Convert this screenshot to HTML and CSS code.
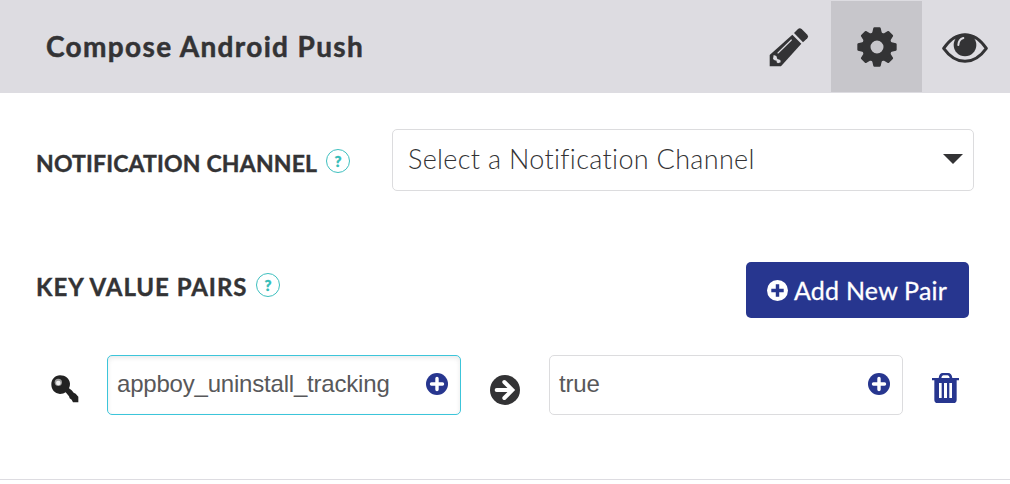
FILE: index.html
```html
<!DOCTYPE html>
<html lang="en">
<head>
<meta charset="utf-8">
<title>Compose Android Push</title>
<link rel="stylesheet" href="styles.css">
</head>
<body>
<main class="panel">
  <header class="header">
    <h1 class="title"><span>Compose Android Push</span></h1>
    <nav class="tabs">
      <button class="tab" aria-label="Compose">
        <svg width="40" height="40" viewBox="0 0 120 120" fill="#333335">
          <path d="M2 84L70 23L97 50L36 118H2Z"/>
          <path d="M75 18L87 6Q92 1 98 6L115 23Q120 29 115 34L102 46Z"/>
          <path d="M14 84L22 87L25 96L34 99L35 106L27 109L23 106V101L17 100L12 96Z" fill="#dddce1"/>
          <path d="M27 78L67 39" stroke="#dddce1" stroke-width="3.5" stroke-linecap="round"/>
        </svg>
      </button>
      <button class="tab tab-active" aria-label="Settings">
        <svg width="40" height="40" viewBox="-60 -60 120 120" fill="#333335">
          <defs><path id="tooth" d="M-20 -35L-14 -44L-11 -57Q-10 -59 -8 -59H8Q10 -59 11 -57L14 -44L20 -35Z"/></defs>
          <use href="#tooth"/><use href="#tooth" transform="rotate(45)"/><use href="#tooth" transform="rotate(90)"/><use href="#tooth" transform="rotate(135)"/><use href="#tooth" transform="rotate(180)"/><use href="#tooth" transform="rotate(225)"/><use href="#tooth" transform="rotate(270)"/><use href="#tooth" transform="rotate(315)"/>
          <circle r="32" fill="none" stroke="#333335" stroke-width="25"/>
        </svg>
      </button>
      <button class="tab" aria-label="Preview">
        <svg width="46" height="30" viewBox="0 0 138 90">
          <path d="M5 46Q33 5 69 5Q105 5 133 46Q105 85 69 85Q33 85 5 46Z" fill="none" stroke="#333335" stroke-width="9" stroke-linejoin="round"/>
          <circle cx="69" cy="36" r="34" fill="#333335"/>
          <path d="M49 36Q50 19 64 15" fill="none" stroke="#dddce1" stroke-width="6" stroke-linecap="round"/>
        </svg>
      </button>
    </nav>
  </header>

  <section class="channel">
    <h2 class="label label-channel"><span>NOTIFICATION CHANNEL</span></h2>
    <span class="help">?</span>
    <div class="select">
      <span class="select-text">Select a Notification Channel</span>
      <svg width="20" height="10" viewBox="0 0 20 10"><path d="M0 0H20L10 10Z" fill="#333335"/></svg>
    </div>
  </section>

  <section class="pairs-head">
    <h2 class="label label-pairs"><span>KEY VALUE PAIRS</span></h2>
    <span class="help help-pairs">?</span>
    <button class="add">
      <svg width="21" height="21" viewBox="0 0 22 22"><circle cx="11" cy="11" r="11" fill="#fff"/><path d="M11 4.5V17.5M4.5 11H17.5" stroke="#27368f" stroke-width="3.6"/></svg>
      <span class="add-text">Add New Pair</span>
    </button>
  </section>

  <section class="pair">
    <svg class="key" width="28" height="28" viewBox="0 0 84 84" fill="#222">
      <path d="M27 1C43 1 56 11 57 26Q57 35 54 40L62 46L68 53L74 56L82 65V82H66L62 74L56 70L54 64L44 52Q38 57 27 57C11 56 1 44 1 28C1 13 12 1 27 1Z"/>
      <circle cx="22" cy="22" r="11" fill="#999"/>
      <circle cx="22" cy="24" r="7" fill="#eee"/>
    </svg>
    <div class="field field-focus">
      <span>appboy_uninstall_tracking</span>
      <svg width="22" height="22" viewBox="0 0 22 22"><circle cx="11" cy="11" r="11" fill="#27368f"/><path d="M11 5.5V16.5M5.5 11H16.5" stroke="#fff" stroke-width="3.4" stroke-linecap="round"/></svg>
    </div>
    <svg class="arrow" width="30" height="30" viewBox="0 0 90 90">
      <circle cx="45" cy="45" r="45" fill="#333335"/>
      <path d="M20 45H66M43 21L67 45L43 69" fill="none" stroke="#fff" stroke-width="12" stroke-linecap="round" stroke-linejoin="miter"/>
    </svg>
    <div class="field">
      <span>true</span>
      <svg width="22" height="22" viewBox="0 0 22 22"><circle cx="11" cy="11" r="11" fill="#27368f"/><path d="M11 5.5V16.5M5.5 11H16.5" stroke="#fff" stroke-width="3.4" stroke-linecap="round"/></svg>
    </div>
    <svg class="trash" width="27" height="30" viewBox="0 0 81 90" fill="#27368f">
      <path fill-rule="evenodd" d="M0 15H20Q22 0 32 0H48Q59 0 61 15H81V22H74V80Q74 90 64 90H17Q7 90 7 80V22H0ZM28 15H53Q52 7 47 7H34Q29 7 28 15ZM21 30V75H29V30ZM36 30V75H45V30ZM52 30V75H60V30Z"/>
    </svg>
  </section>
</main>
</body>
</html>
```
FILE: styles.css
```css
* { box-sizing: border-box; }
body {
  margin: 0;
  background: #fff;
  color: #333335;
  font-family: Lato, sans-serif;
  font-variant-ligatures: none;
}
button {
  border: 0;
  padding: 0;
  background: none;
  font: inherit;
}
svg { display: block; flex: none; }
h1, h2 { margin: 0; white-space: nowrap; }

.panel {
  height: 480px;
  border-bottom: 1px solid #dddce1;
}
.header {
  display: flex;
  justify-content: space-between;
  height: 93px;
  padding-left: 46px;
  background: #dddce1;
}
.title {
  padding-top: 29px;
  font-size: 28px;
  line-height: 34px;
  font-weight: 700;
  letter-spacing: 1.35px;
  -webkit-text-stroke: .5px #333335;
}
.tabs { display: flex; padding: 1px 0; }
.tab {
  display: flex;
  align-items: center;
  justify-content: center;
  width: 86px;
  height: 91px;
  padding: 1px 0 0 1px;
}
.tab-active { width: 91px; background: #c7c6cb; }
.tab:last-child { width: 88px; padding: 3px 2px 0 0; }

.channel {
  display: flex;
  align-items: flex-start;
  padding: 36px 36px 0;
}
.label {
  font-size: 23px;
  line-height: 28px;
  font-weight: 700;
  -webkit-text-stroke: .4px #333335;
}
.label-channel { width: 290px; padding-top: 20px; letter-spacing: .17px; }
.label-pairs { width: 220px; padding-top: 11px; font-size: 24px; letter-spacing: .95px; }
.help {
  width: 24px;
  height: 24px;
  margin-top: 20px;
  border: 1px solid #3ec0bf;
  border-radius: 50%;
  color: #34bdb9;
  font-size: 15px;
  line-height: 22px;
  font-weight: 900;
  text-align: center;
  -webkit-text-stroke: .4px #34bdb9;
}
.help-pairs { margin-top: 11px; }
.select {
  display: flex;
  align-items: center;
  justify-content: space-between;
  width: 582px;
  height: 62px;
  margin-left: auto;
  padding: 0 10px 3px 15px;
  border: 1px solid #dcdcde;
  border-radius: 5px;
}
.select-text {
  font-size: 27px;
  font-weight: 300;
  letter-spacing: .32px;
  white-space: nowrap;
}
.pairs-head {
  display: flex;
  align-items: flex-start;
  padding: 71px 41px 0 36px;
}
.add {
  display: flex;
  align-items: center;
  gap: 6px;
  width: 223px;
  height: 56px;
  margin-left: auto;
  padding-left: 21px;
  border-radius: 5px;
  background: #27368f;
  color: #fff;
  font-size: 25px;
  letter-spacing: .22px;
  white-space: nowrap;
  -webkit-text-stroke: .3px #fff;
}
.pair {
  display: flex;
  align-items: flex-start;
  padding: 37px 0 0 51px;
}
.key { margin: 20px 28px 0 0; }
.field {
  display: flex;
  align-items: center;
  justify-content: space-between;
  width: 354px;
  height: 60px;
  padding: 0 12px 3px 9px;
  border: 1px solid #dcdcde;
  border-radius: 5px;
  color: #58585a;
  font: 24px "Liberation Sans", Arial, sans-serif;
  letter-spacing: -.2px;
}
.field-focus {
  border-color: #3cc5da;
  box-shadow: inset 0 2px 5px rgba(0, 0, 0, .09);
}
.arrow { margin: 20px 29px 0; }
.trash { margin: 18px 0 0 29px; }
```
